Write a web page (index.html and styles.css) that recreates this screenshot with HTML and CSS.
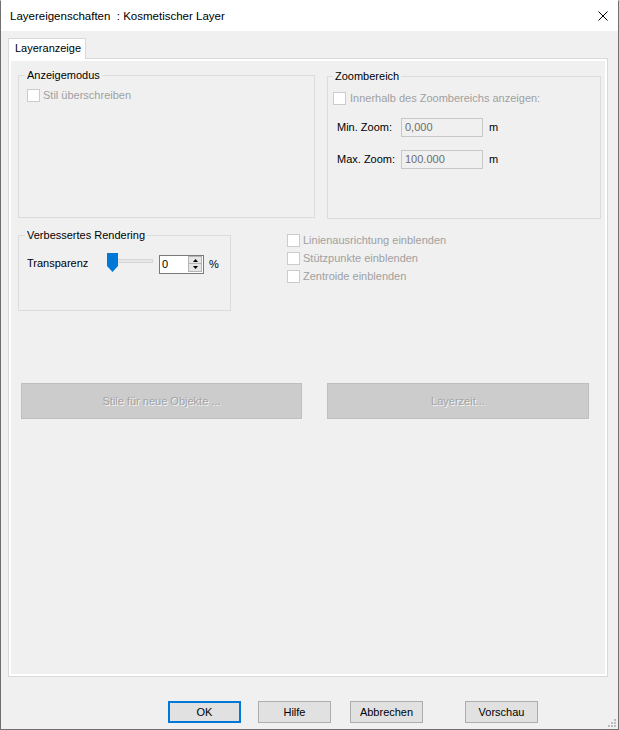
FILE: index.html
```html
<!DOCTYPE html>
<html lang="de">
<head>
    <meta charset="UTF-8">
    <meta name="viewport" content="width=device-width, initial-scale=1.0">
    <title>Layereigenschaften</title>
    <link rel="stylesheet" href="styles.css">
</head>
<body>
    <div class="window">
        <div class="titlebar">
            <span class="title">Layereigenschaften&nbsp; : Kosmetischer Layer</span>
            <svg class="close" width="10" height="10" viewBox="0 0 10 10">
                <path d="M0.5 0.5 L9.5 9.5 M9.5 0.5 L0.5 9.5" stroke="#000" stroke-width="1" fill="none"/>
            </svg>
        </div>

        <div class="tabs">
            <div class="tab">Layeranzeige</div>
        </div>

        <div class="page">
            <div class="row top-row">
                <div class="group group-mode">
                    <div class="group-title">Anzeigemodus</div>
                    <label class="check disabled"><span class="box"></span>Stil überschreiben</label>
                </div>
                <div class="group group-zoom">
                    <div class="group-title">Zoombereich</div>
                    <label class="check disabled"><span class="box"></span>Innerhalb des Zoombereichs anzeigen:</label>
                    <div class="zoom-grid">
                        <span class="zoom-label">Min. Zoom:</span>
                        <span class="field">0,000</span>
                        <span class="unit">m</span>
                        <span class="zoom-label">Max. Zoom:</span>
                        <span class="field">100.000</span>
                        <span class="unit">m</span>
                    </div>
                </div>
            </div>

            <div class="row mid-row">
                <div class="group group-render">
                    <div class="group-title">Verbessertes Rendering</div>
                    <div class="transp">
                        <span class="transp-label">Transparenz</span>
                        <svg class="slider" width="47" height="20" viewBox="0 0 47 20">
                            <rect x="1.5" y="6.5" width="44" height="3" fill="#e7e7e7" stroke="#d6d6d6"/>
                            <path d="M0 0 H11 V13 L5.5 19 L0 13 Z" fill="#0078d7"/>
                        </svg>
                        <div class="spin">
                            <span class="spin-value">0</span>
                            <div class="spin-btns">
                                <span class="spin-btn">
                                    <svg width="5" height="3" viewBox="0 0 5 3"><path d="M2.5 0 L5 3 L0 3 Z" fill="#000"/></svg>
                                </span>
                                <span class="spin-btn">
                                    <svg width="5" height="3" viewBox="0 0 5 3"><path d="M0 0 L5 0 L2.5 3 Z" fill="#000"/></svg>
                                </span>
                            </div>
                        </div>
                        <span class="percent">%</span>
                    </div>
                </div>
                <div class="check-list">
                    <label class="check disabled"><span class="box"></span>Linienausrichtung einblenden</label>
                    <label class="check disabled"><span class="box"></span>Stützpunkte einblenden</label>
                    <label class="check disabled"><span class="box"></span>Zentroide einblenden</label>
                </div>
            </div>

            <div class="row action-row">
                <button class="big-btn btn-styles" disabled>Stile für neue Objekte ...</button>
                <button class="big-btn btn-time" disabled>Layerzeit...</button>
            </div>
        </div>

        <div class="footer">
            <button class="btn btn-default">OK</button>
            <button class="btn btn-help">Hilfe</button>
            <button class="btn btn-cancel">Abbrechen</button>
            <button class="btn btn-preview">Vorschau</button>
        </div>

        <svg class="grip" width="9" height="9" viewBox="0 0 9 9">
            <rect x="7" y="1" width="2" height="2" fill="#bdbdbd"/>
            <rect x="4" y="4" width="2" height="2" fill="#bdbdbd"/>
            <rect x="7" y="4" width="2" height="2" fill="#bdbdbd"/>
            <rect x="1" y="7" width="2" height="2" fill="#bdbdbd"/>
            <rect x="4" y="7" width="2" height="2" fill="#bdbdbd"/>
            <rect x="7" y="7" width="2" height="2" fill="#bdbdbd"/>
        </svg>
    </div>
</body>
</html>
```

FILE: styles.css
```css
body {
    margin: 0;
    font-family: "Liberation Sans", Arial, sans-serif;
    font-size: 11px;
    color: #000;
}

.window {
    position: relative;
    width: 619px;
    height: 730px;
    box-sizing: border-box;
    border: 1px solid #707070;
    border-top-color: #fff;
    background: #f0f0f0;
    overflow: hidden;
}

.titlebar {
    display: flex;
    align-items: center;
    height: 30px;
    padding-left: 9px;
    background: #fff;
}

.title {
    font-size: 11.5px;
}

.close {
    margin-left: auto;
    margin-right: 10px;
}

.tabs {
    display: flex;
    padding: 7px 0 0 7px;
}

.tab {
    position: relative;
    z-index: 1;
    width: 78px;
    height: 21px;
    box-sizing: border-box;
    margin-bottom: -1px;
    padding: 3px 0 0 6px;
    border: 1px solid #d9d9d9;
    border-bottom: none;
    background: #fff;
    line-height: 13px;
}

.page {
    width: 600px;
    height: 619px;
    box-sizing: border-box;
    margin-left: 7px;
    padding: 16px 0 0 9px;
    border: 1px solid #d9d9d9;
    box-shadow: inset 0 0 0 2px #fff;
}

.row {
    display: flex;
    align-items: flex-start;
}

.group {
    display: flex;
    flex-direction: column;
    align-items: flex-start;
    box-sizing: border-box;
    border: 1px solid #dcdcdc;
}

.group-title {
    margin: -7px 0 0 6px;
    padding: 0 2px;
    background: #f0f0f0;
    line-height: 13px;
}

/* checkboxes */

.check {
    display: flex;
    align-items: flex-start;
    gap: 3px;
    line-height: 13px;
    white-space: nowrap;
}

.check .box {
    width: 13px;
    height: 13px;
    box-sizing: border-box;
    border: 1px solid #cccccc;
    background: #fff;
}

.check.disabled {
    color: #a0a0a0;
}

/* Anzeigemodus / Zoombereich */

.top-row {
    gap: 12px;
}

.group-mode {
    width: 297px;
    height: 143px;
}

.group-mode .check {
    margin: 7px 0 0 8px;
}

.group-zoom {
    width: 274px;
    height: 143px;
    margin-top: 1px;
}

.group-zoom .group-title {
    margin-left: 5px;
}

.group-zoom .check {
    margin: 9px 0 0 5px;
    gap: 4px;
}

.zoom-grid {
    display: grid;
    grid-template-columns: 58px 82px auto;
    column-gap: 6px;
    row-gap: 13px;
    margin: 13px 0 0 9px;
    line-height: 19px;
}

.zoom-label {
    white-space: nowrap;
}

.field {
    height: 19px;
    box-sizing: border-box;
    padding-left: 3px;
    border: 1px solid #c8c8c8;
    background: #f0f0f0;
    color: #6d6d6d;
    line-height: 17px;
}

/* Verbessertes Rendering */

.mid-row {
    margin-top: 16px;
}

.group-render {
    width: 213px;
    height: 76px;
}

.transp {
    display: flex;
    align-items: flex-start;
    margin: 13px 0 0 8px;
}

.transp-label {
    width: 80px;
    line-height: 16px;
}

.slider {
    margin-top: -2px;
}

.spin {
    display: flex;
    width: 45px;
    height: 19px;
    box-sizing: border-box;
    margin-left: 5px;
    border: 1px solid #7a7a7a;
    background: #fff;
}

.spin-value {
    flex: 1;
    padding-left: 2px;
    line-height: 17px;
}

.spin-btns {
    display: flex;
    flex-direction: column;
    margin-right: 1px;
}

.spin-btn {
    display: flex;
    align-items: center;
    justify-content: center;
    width: 14px;
    height: 8px;
    box-sizing: border-box;
    border: 1px solid #b4b4b4;
    background: #e6e6e6;
}

.spin-btn + .spin-btn {
    border-top: none;
    height: 8px;
}

.percent {
    margin-left: 5px;
    line-height: 18px;
}

.check-list {
    display: flex;
    flex-direction: column;
    gap: 5px;
    margin: -1px 0 0 56px;
}

/* Buttons */

.action-row {
    gap: 25px;
    margin-top: 72px;
    padding-left: 3px;
}

.big-btn {
    height: 36px;
    padding: 0;
    border: 1px solid #bfbfbf;
    background: #cccccc;
    color: #a3a3a3;
    font-family: inherit;
    font-size: 11px;
    text-shadow: 1px 1px 0 #f4f4f4;
}

.btn-styles {
    width: 281px;
}

.btn-time {
    width: 262px;
}

.footer {
    display: flex;
    margin-top: 24px;
    padding-left: 167px;
}

.btn {
    width: 73px;
    height: 22px;
    box-sizing: border-box;
    padding: 0;
    border: 1px solid #adadad;
    background: #e1e1e1;
    color: #000;
    font-family: inherit;
    font-size: 11px;
}

.btn-default {
    border: 2px solid #0078d7;
}

.btn-help {
    margin-left: 17px;
}

.btn-cancel {
    margin-left: 19px;
}

.btn-preview {
    margin-left: 42px;
}

.grip {
    position: absolute;
    right: 2px;
    bottom: 2px;
}
```
